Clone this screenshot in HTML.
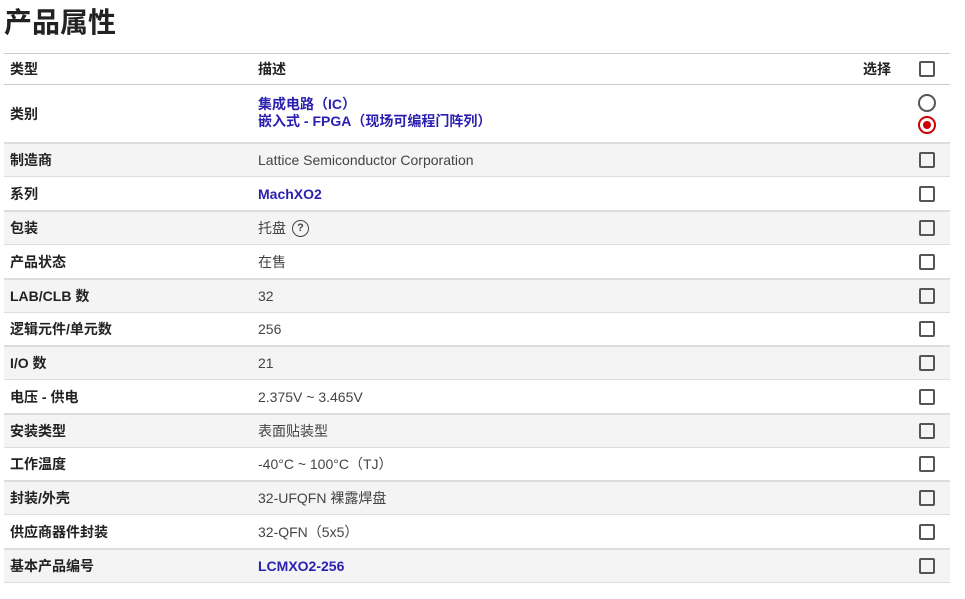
<!DOCTYPE html>
<html><head><meta charset="utf-8"><style>
*{margin:0;padding:0;box-sizing:border-box}
body{width:965px;height:599px;background:#fff;font-family:"Liberation Sans","Noto Sans CJK SC",sans-serif;color:#222;position:relative;overflow:hidden}
h1{position:absolute;left:4px;top:1px;font-size:28px;font-weight:bold;color:#222;font-family:"Noto Sans CJK SC",sans-serif}
.t{position:absolute;left:4px;top:53px;width:946px;border-top:1px solid #ccc}
.r{position:relative;border-bottom:1px solid #ddd;font-size:14px}
.g{background:#f4f4f4;border-top:1px solid #ddd}
.l{position:absolute;left:6px;font-weight:bold;color:#222}
.d{position:absolute;left:254px;color:#444}
.a{color:#2a1fb0;font-weight:bold}
.cb{position:absolute;left:915px;width:16px;height:16px;border:2px solid #555;border-radius:2px}
.mid{top:50%;transform:translateY(-50%)}
</style></head><body>
<h1>产品属性</h1>
<div class="t">
<div class="r" style="height:31px;border-bottom:1px solid #ccc"><span class="l mid">类型</span><span class="d mid" style="color:#222;font-weight:bold">描述</span><span class="mid" style="position:absolute;left:859px;font-weight:bold">选择</span><span class="cb mid"></span></div>
<div class="r" style="height:58px"><span class="l mid">类别</span><span class="d mid a" style="line-height:17px;margin-top:-1px">集成电路（IC）<br>嵌入式 - FPGA（现场可编程门阵列）</span>
<span style="position:absolute;left:914px;top:9px;width:18px;height:18px;border:2px solid #555;border-radius:50%"></span>
<span style="position:absolute;left:914px;top:31px;width:18px;height:18px;border:2px solid #c00;border-radius:50%"><span style="position:absolute;left:3px;top:3px;width:8px;height:8px;background:#c00;border-radius:50%"></span></span></div>
<div class="r g" style="height:34px"><span class="l mid">制造商</span><span class="d mid">Lattice Semiconductor Corporation</span><span class="cb mid"></span></div>
<div class="r" style="height:34px"><span class="l mid">系列</span><span class="d mid a">MachXO2</span><span class="cb mid"></span></div>
<div class="r g" style="height:34px"><span class="l mid">包装</span><span class="d mid" style="display:flex;align-items:center">托盘<span style="display:inline-block;width:17px;height:17px;border:1.5px solid #444;border-radius:50%;font-size:11px;text-align:center;line-height:14px;font-weight:bold;margin-left:6px">?</span></span><span class="cb mid"></span></div>
<div class="r" style="height:34px"><span class="l mid">产品状态</span><span class="d mid">在售</span><span class="cb mid"></span></div>
<div class="r g" style="height:34px"><span class="l mid">LAB/CLB 数</span><span class="d mid">32</span><span class="cb mid"></span></div>
<div class="r" style="height:33px"><span class="l mid">逻辑元件/单元数</span><span class="d mid">256</span><span class="cb mid"></span></div>
<div class="r g" style="height:34px"><span class="l mid">I/O 数</span><span class="d mid">21</span><span class="cb mid"></span></div>
<div class="r" style="height:34px"><span class="l mid">电压 - 供电</span><span class="d mid">2.375V ~ 3.465V</span><span class="cb mid"></span></div>
<div class="r g" style="height:34px"><span class="l mid">安装类型</span><span class="d mid">表面贴装型</span><span class="cb mid"></span></div>
<div class="r" style="height:33px"><span class="l mid">工作温度</span><span class="d mid">-40°C ~ 100°C（TJ）</span><span class="cb mid"></span></div>
<div class="r g" style="height:34px"><span class="l mid">封装/外壳</span><span class="d mid">32-UFQFN 裸露焊盘</span><span class="cb mid"></span></div>
<div class="r" style="height:34px"><span class="l mid">供应商器件封装</span><span class="d mid">32-QFN（5x5）</span><span class="cb mid"></span></div>
<div class="r g" style="height:34px"><span class="l mid">基本产品编号</span><span class="d mid a">LCMXO2-256</span><span class="cb mid"></span></div>
</div>
</body></html>
